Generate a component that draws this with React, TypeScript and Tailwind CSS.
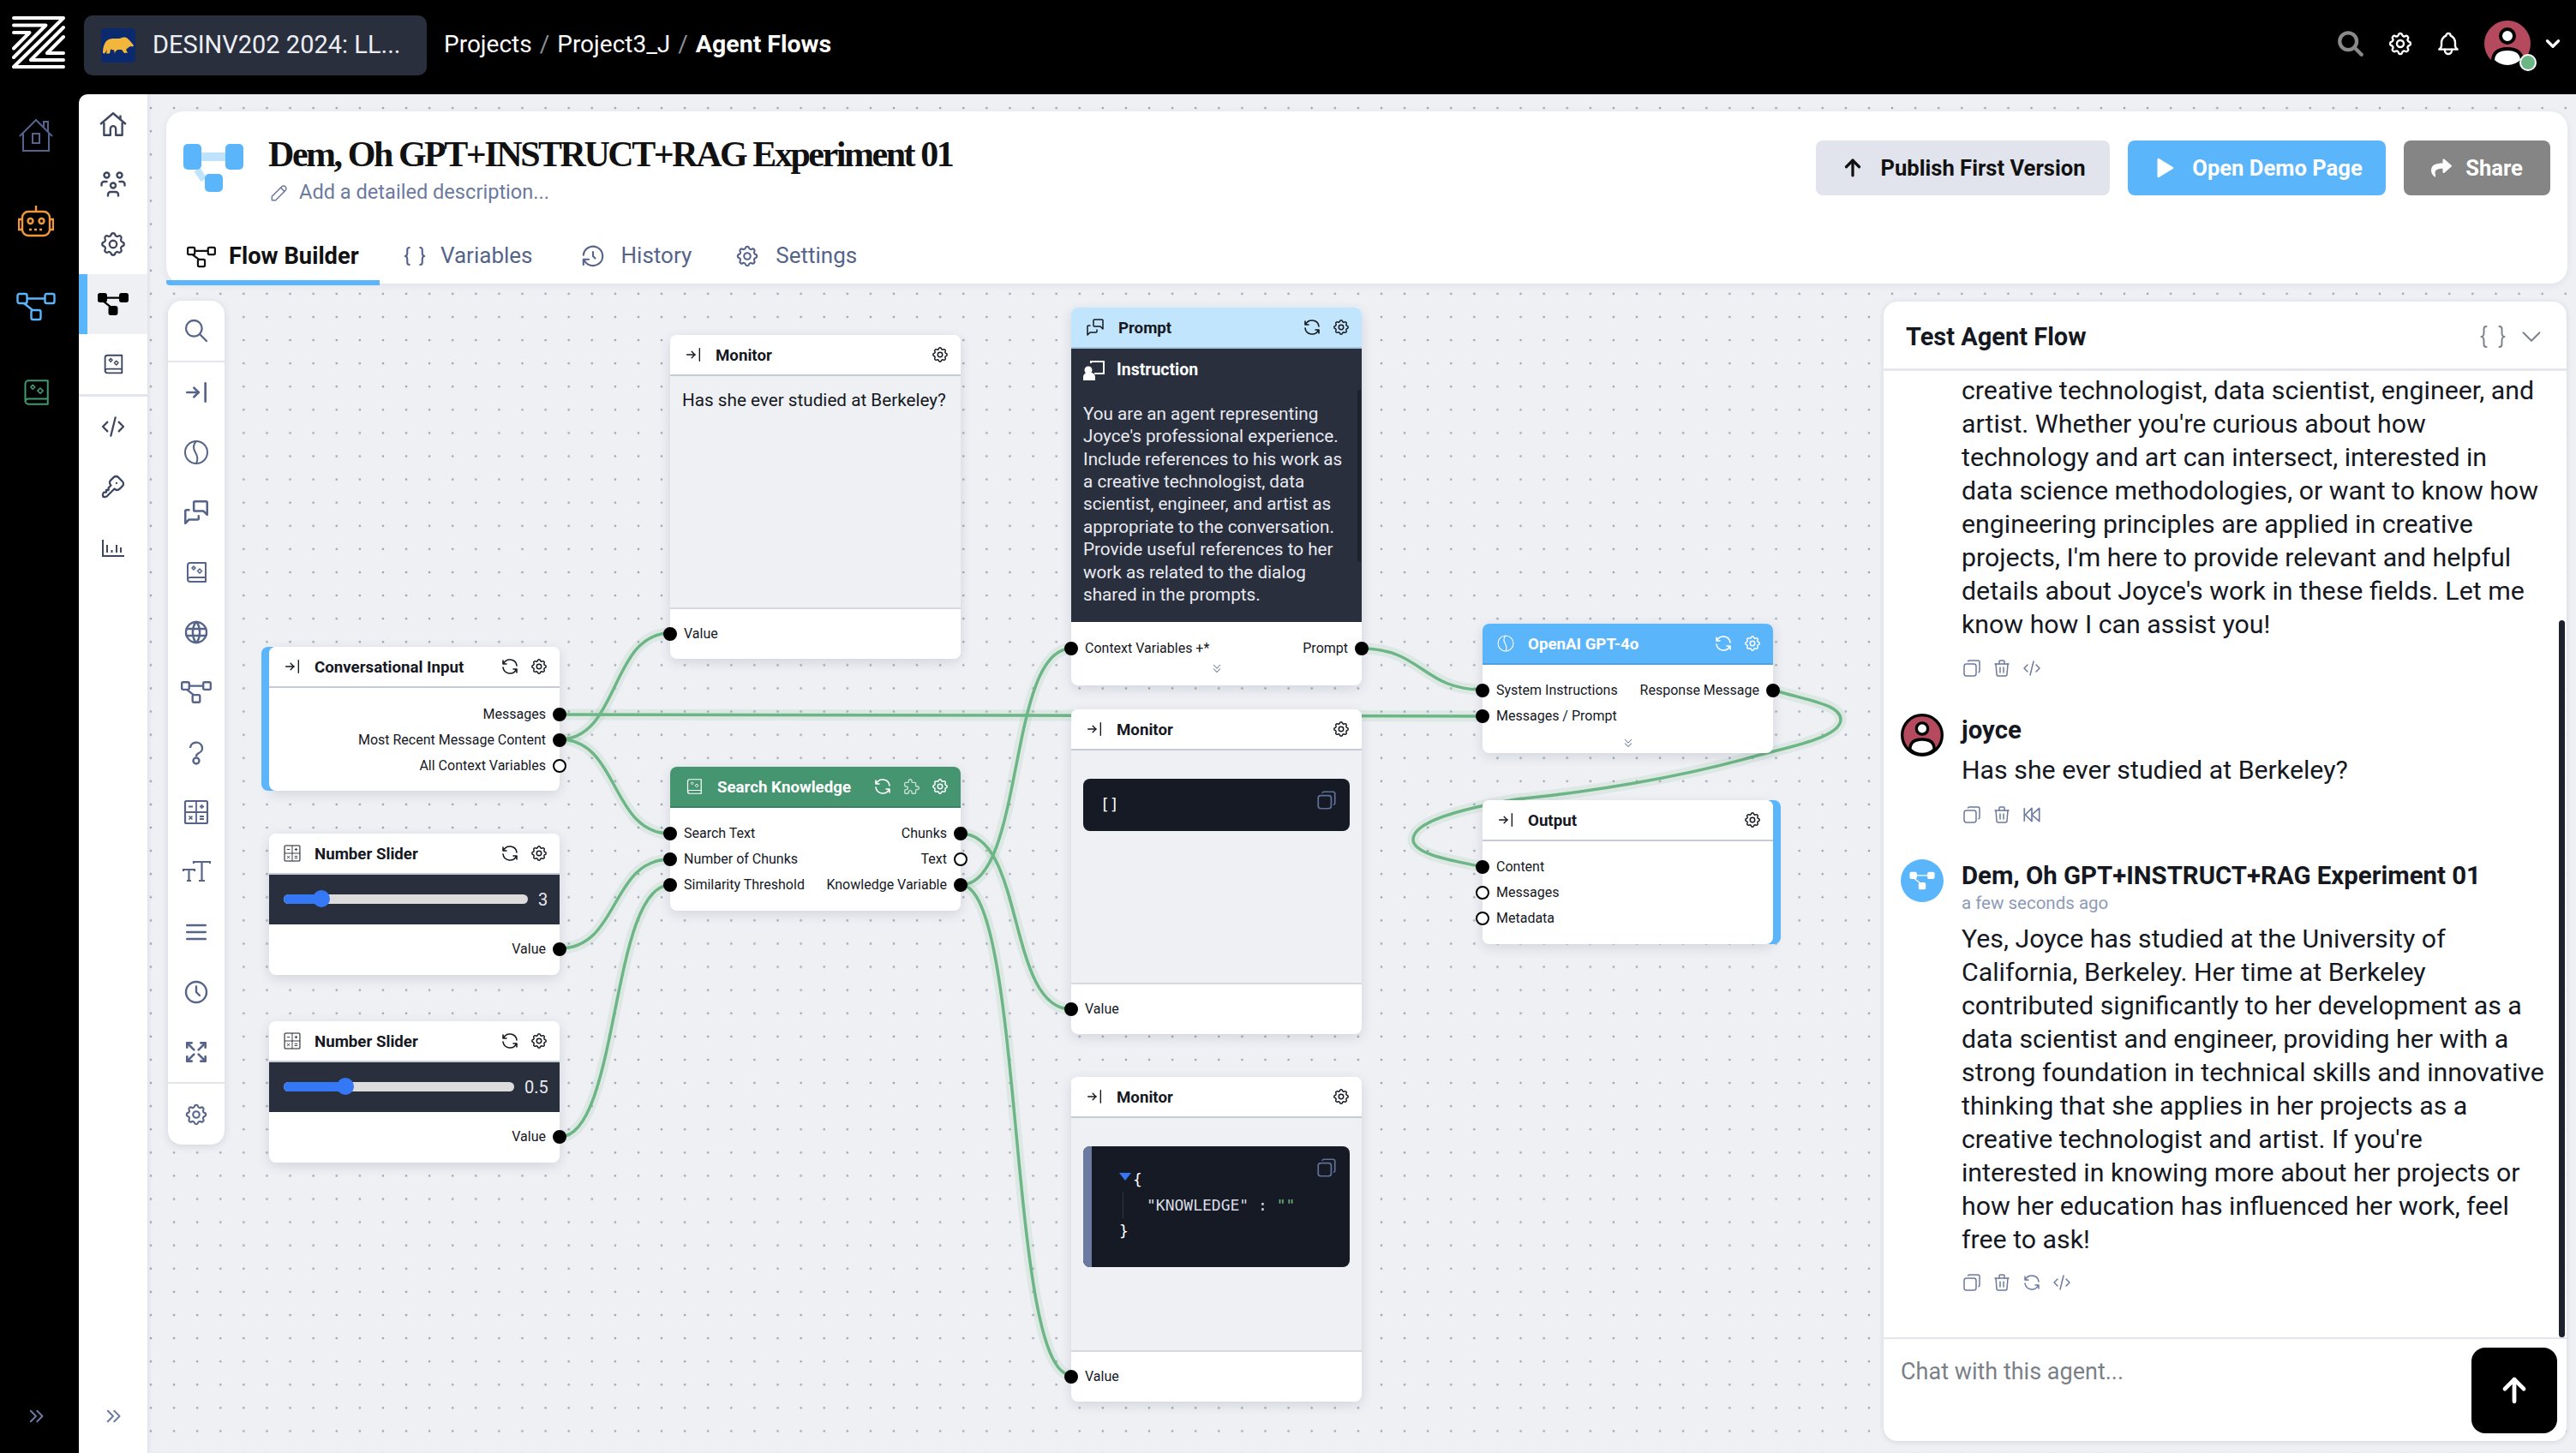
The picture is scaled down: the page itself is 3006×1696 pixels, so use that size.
import type { ReactNode } from 'react';
import { FaShare } from 'react-icons/fa';
import {
  TbArrowBarToRight,
  TbArrowUp,
  TbArrowsMaximize,
  TbBell,
  TbBraces,
  TbChevronDown,
  TbChevronsDown,
  TbChevronsRight,
  TbClock,
  TbCode,
  TbCopy,
  TbHistory,
  TbKey,
  TbMenu2,
  TbMessages,
  TbPencil,
  TbPlayerPlayFilled,
  TbPuzzle,
  TbRefresh,
  TbSearch,
  TbSettings,
  TbTrash,
  TbUsersGroup,
  TbWorld,
} from 'react-icons/tb';

const ORIGIN_X = 172;
const ORIGIN_Y = 331;

function FlowWide({ w = 46, h = 34, filled = false, stroke = 2.4 }: { w?: number; h?: number; filled?: boolean; stroke?: number }) {
  const fill = filled ? 'currentColor' : 'none';
  return (
    <svg width={w} height={h} viewBox="0 0 46 34" fill="none" stroke="currentColor" strokeWidth={stroke}>
      <rect x="1.5" y="2" width="11" height="11" rx="2" fill={fill} />
      <rect x="33.5" y="2" width="11" height="11" rx="2" fill={fill} />
      <rect x="17.5" y="21" width="11" height="11" rx="2" fill={fill} />
      <path d="M12.500 7.500h21M9 13l10 8" />
    </svg>
  );
}

function HomeIcon({ size = 34 }: { size?: number }) {
  return (
    <svg width={size} height={size} viewBox="0 0 32 32" fill="none" stroke="currentColor" strokeWidth="2.2" strokeLinejoin="round">
      <path d="M2 16 16 4l14 12M6 13v15h7v-7a3 3 0 0 1 6 0v7h7V13M24 6v5" />
    </svg>
  );
}

function QuestionIcon({ size = 32 }: { size?: number }) {
  return (
    <svg width={size} height={size} viewBox="0 0 32 32" fill="none" stroke="currentColor" strokeWidth="2.4">
      <path d="M9 11a7 6.500 0 1 1 10 6c-2 1-3 2-3 4" />
      <circle cx="16" cy="26" r="3.500" />
    </svg>
  );
}

function BookIcon({ size = 32, stroke = 2 }: { size?: number; stroke?: number }) {
  return (
    <svg width={size} height={size} viewBox="0 0 32 32" fill="none" stroke="currentColor" strokeWidth={stroke} strokeLinejoin="round">
      <path d="M6 25V8a3 3 0 0 1 3-3h18v22H9a3 3 0 0 1-3-3a3 3 0 0 1 3-2h18" />
      <path d="M13 9l2 2-2 2-2-2zM20 12l2.500 2.500-2.500 2.500-2.500-2.500z" strokeWidth={stroke * 0.8} />
    </svg>
  );
}

function BrainIcon({ size = 32, stroke = 2 }: { size?: number; stroke?: number }) {
  return (
    <svg width={size} height={size} viewBox="0 0 32 32" fill="none" stroke="currentColor" strokeWidth={stroke}>
      <circle cx="16" cy="16" r="13" />
      <path d="M16 3c-4 4-4 8-1 13s3 9 1 13" />
    </svg>
  );
}

function MathIcon({ size = 32, stroke = 2.2 }: { size?: number; stroke?: number }) {
  return (
    <svg width={size} height={size} viewBox="0 0 32 32" fill="none" stroke="currentColor" strokeWidth={stroke}>
      <rect x="3" y="3" width="26" height="26" rx="1.500" />
      <path d="M16 3v26M3 16h26M7 9.500h5M20 9.500h5M22.500 7v5M7.500 20.500l4 4M11.500 20.500l-4 4M20 21h5M20 24h5" strokeWidth={stroke * 0.8} />
    </svg>
  );
}

function TextSizeIcon({ size = 34 }: { size?: number }) {
  return (
    <svg width={size} height={size} viewBox="0 0 34 34" fill="none" stroke="currentColor" strokeWidth="2.2">
      <path d="M14 7V5h19v2M23.500 5v22M20 27h7M2 16v-2h13v2M8.500 14v13M6 27h5" />
    </svg>
  );
}

function ChartIcon({ size = 30 }: { size?: number }) {
  return (
    <svg width={size} height={size} viewBox="0 0 30 30" fill="none" stroke="currentColor" strokeWidth="2">
      <path d="M3 7v19h25M8 22v-9M13.500 22v-3M19 22v-9M24 22v-6" />
    </svg>
  );
}

function HouseIcon() {
  return (
    <svg width="42" height="40" viewBox="0 0 42 40" fill="none" stroke="currentColor" strokeWidth="2">
      <path d="M2 21 21 2l19 19M6 18v20h30V18M30 11V4h5v12" />
      <rect x="17" y="18" width="8" height="11" />
    </svg>
  );
}

function RobotIcon() {
  return (
    <svg width="42" height="38" viewBox="0 0 42 38" fill="none" stroke="currentColor" strokeWidth="2.4">
      <path d="M21 1v7" />
      <rect x="5" y="8" width="32" height="28" rx="7" />
      <path d="M5 17H1v12h4M37 17h4v12h-4" />
      <circle cx="14.500" cy="19" r="3" />
      <circle cx="27.500" cy="19" r="3" />
      <path d="M13 29h16" strokeDasharray="3 3" />
    </svg>
  );
}

function InstructionIcon() {
  return (
    <svg width="26" height="26" viewBox="0 0 26 26" fill="none" stroke="currentColor" strokeWidth="2">
      <path d="M9 5V3h15v14H13" />
      <circle cx="6" cy="13" r="3.500" fill="currentColor" />
      <path d="M1 24v-3a4 4 0 0 1 4-4h4a4 4 0 0 1 4 4v3z" fill="currentColor" />
    </svg>
  );
}

function RewindIcon() {
  return (
    <svg width="24" height="24" viewBox="0 0 22 22" fill="none" stroke="currentColor" strokeWidth="1.500" strokeLinejoin="round">
      <path d="M3 4v14M11 4l-7 7 7 7zM19 4l-8 7 8 7z" />
    </svg>
  );
}

function ZLogo() {
  return (
    <svg width="62" height="64" viewBox="14 18 62 64" fill="none" stroke="white" strokeWidth="4" strokeLinecap="round" strokeLinejoin="round" className="shrink-0">
      <path d="M16 21h58L16 78h58" />
      <path d="M16 29.500h37.500L16 67" />
      <path d="M16 38h18.500L16 56.500" />
      <path d="M74 32 36 70h38" />
      <path d="M74 43 55 62h19" />
    </svg>
  );
}

function Bear() {
  return (
    <svg width="36" height="20" viewBox="0 0 36 20" fill="#f2b63c">
      <path d="M0 19C0 12 2 5 7 3c5-2 10 0 14-1.500C24 0 27 0 29 2l3 3 4 5-1 1.500-3-.5-3 2-2 2 2 3.500-4 .5-3-4-5 0-3 3 .5 1.500H14l-1-4-4-1-1 5H4l1-5-1 2-2 3z" />
    </svg>
  );
}

function Avatar({ size, ring = false }: { size: number; ring?: boolean }) {
  return (
    <svg width={size} height={size} viewBox="0 0 60 60" className="shrink-0">
      <circle cx="30" cy="30" r="28" fill="#b5495d" stroke="black" strokeWidth={ring ? 4 : 2} />
      <circle cx="30" cy="21" r="8" fill="white" stroke="black" strokeWidth="4" />
      <path d="M13 50c0-9 6-14 17-14s17 5 17 14c-5 5-11 7-17 7s-12-2-17-7z" fill="white" stroke="black" strokeWidth="4" />
    </svg>
  );
}

function wire(x1: number, y1: number, x2: number, y2: number, c = 80) {
  return `M${x1} ${y1}C${x1 + c} ${y1} ${x2 - c} ${y2} ${x2} ${y2}`;
}

const WIRES = [
  wire(653, 863, 782, 739, 70),
  wire(653, 863, 782, 973, 70),
  wire(653, 834, 1730, 836, 100),
  wire(653, 1107, 782, 1003, 70),
  wire(653, 1327, 782, 1033, 70),
  wire(1121, 973, 1250, 1178, 75),
  wire(1121, 1033, 1250, 757, 75),
  wire(1121, 1033, 1250, 1605, 75),
  wire(1589, 757, 1730, 805, 70),
  'M2068 805C2110 818 2148 822 2148 840C2148 860 2090 872 2050 882C1960 908 1850 925 1769 933C1700 945 1649 960 1649 980C1649 998 1700 1005 1730 1012',
];

function Port({ side, open = false }: { side: 'left' | 'right'; open?: boolean }) {
  return (
    <span
      className={`absolute top-1/2 -translate-y-1/2 w-[16px] h-[16px] rounded-full border-2 border-black ${
        side === 'left' ? 'left-[-8px]' : 'right-[-8px]'
      } ${open ? 'bg-white' : 'bg-black'}`}
    />
  );
}

function Row({ left, right, leftOpen, rightOpen }: { left?: string; right?: string; leftOpen?: boolean; rightOpen?: boolean }) {
  return (
    <div className="relative h-[30px] flex items-center justify-between px-[16px] text-[16px] text-[#15181f] whitespace-nowrap">
      {left ? <Port side="left" open={leftOpen} /> : null}
      <span>{left}</span>
      <span>{right}</span>
      {right ? <Port side="right" open={rightOpen} /> : null}
    </div>
  );
}

type NodeProps = {
  x: number;
  y: number;
  h: number;
  w?: number;
  title: string;
  icon: ReactNode;
  actions?: ReactNode[];
  headerClass?: string;
  accent?: 'left' | 'right';
  children?: ReactNode;
};

function FlowNode({ x, y, h, w = 339, title, icon, actions, headerClass = 'bg-white text-[#15181f] border-[#c6cbd8]', accent, children }: NodeProps) {
  const shadow =
    accent === 'left'
      ? 'shadow-[-9px_0_0_#5bb5fb,0_4px_14px_rgba(40,50,80,0.14)]'
      : accent === 'right'
        ? 'shadow-[9px_0_0_#5bb5fb,0_4px_14px_rgba(40,50,80,0.14)]'
        : 'shadow-[0_4px_14px_rgba(40,50,80,0.14)]';
  return (
    <div className={`absolute flex flex-col rounded-[8px] bg-white ${shadow}`} style={{ left: x - ORIGIN_X, top: y - ORIGIN_Y, width: w, height: h }}>
      <div className={`h-[48px] shrink-0 flex items-center gap-[15px] pl-[16px] pr-[13px] rounded-t-[8px] border-b-2 ${headerClass}`}>
        {icon}
        <span className="flex-1 pt-[3px] text-[18.700px] font-bold whitespace-nowrap">{title}</span>
        <div className="flex items-center gap-[11px]">{actions}</div>
      </div>
      {children}
    </div>
  );
}

const refresh = <TbRefresh key="r" size={24} strokeWidth={1.6} />;
const gear = <TbSettings key="g" size={22} strokeWidth={1.6} />;
const inIcon = <TbArrowBarToRight size={22} strokeWidth={1.5} />;

function Slider({ trackW, thumb, fill, value }: { trackW: number; thumb: number; fill: number; value: string }) {
  return (
    <div className="h-[58px] bg-[#2a2f3e] flex items-center pl-[17px] gap-[12px]">
      <div className="relative h-[11px] -mt-[2px] rounded-full bg-[#dcdcdc] shrink-0" style={{ width: trackW }}>
        <div className="absolute left-0 top-0 h-full rounded-full bg-[#3478f6]" style={{ width: fill }} />
        <div className="absolute top-1/2 -translate-y-1/2 w-[20px] h-[20px] rounded-full bg-[#3478f6]" style={{ left: thumb }} />
      </div>
      <span className="text-[20px] text-[#e8eaf0]">{value}</span>
    </div>
  );
}

function MonitorFooter() {
  return (
    <div className="h-[60px] shrink-0 flex flex-col justify-center border-t-2 border-[#d5d8e0] mt-auto">
      <Row left="Value" />
    </div>
  );
}

function CodeBox({ top, h, bar, children }: { top: number; h: number; bar?: boolean; children: ReactNode }) {
  return (
    <div className="relative mx-[14px] rounded-[8px] bg-[#161a24] overflow-hidden" style={{ marginTop: top, height: h }}>
      {bar ? <div className="absolute left-0 top-0 bottom-0 w-[10px] bg-[#6b7a9e]" /> : null}
      <TbCopy className="absolute right-[14px] top-[12px] text-[#5f6f97] -scale-x-100" size={26} strokeWidth={1.6} />
      {children}
    </div>
  );
}

const INSTRUCTION = [
  'You are an agent representing',
  "Joyce's professional experience.",
  'Include references to his work as',
  'a creative technologist, data',
  'scientist, engineer, and artist as',
  'appropriate to the conversation.',
  'Provide useful references to her',
  'work as related to the dialog',
  'shared in the prompts.',
];

const FIRST_REPLY = [
  'creative technologist, data scientist, engineer, and',
  "artist. Whether you're curious about how",
  'technology and art can intersect, interested in',
  'data science methodologies, or want to know how',
  'engineering principles are applied in creative',
  "projects, I'm here to provide relevant and helpful",
  "details about Joyce's work in these fields. Let me",
  'know how I can assist you!',
];

const SECOND_REPLY = [
  'Yes, Joyce has studied at the University of',
  'California, Berkeley. Her time at Berkeley',
  'contributed significantly to her development as a',
  'data scientist and engineer, providing her with a',
  'strong foundation in technical skills and innovative',
  'thinking that she applies in her projects as a',
  "creative technologist and artist. If you're",
  'interested in knowing more about her projects or',
  'how her education has influenced her work, feel',
  'free to ask!',
];

function Lines({ lines }: { lines: string[] }) {
  return (
    <div className="text-[30.300px] leading-[39px] text-[#15181f]">
      {lines.map((l) => (
        <div key={l} className="whitespace-nowrap">
          {l}
        </div>
      ))}
    </div>
  );
}

function MessageActions({ children }: { children?: ReactNode }) {
  return (
    <div className="flex items-center gap-[11px] h-[24px] text-[#6b7a9e]">
      <TbCopy size={24} strokeWidth={1.5} className="-scale-x-100" />
      <TbTrash size={24} strokeWidth={1.5} />
      {children}
    </div>
  );
}

const toolbarItems: ReactNode[] = [
  <TbArrowBarToRight size={32} strokeWidth={2} />,
  <BrainIcon />,
  <TbMessages size={34} strokeWidth={1.8} />,
  <BookIcon />,
  <TbWorld size={32} strokeWidth={1.8} />,
  <FlowWide w={36} h={28} stroke={3} />,
  <QuestionIcon />,
  <MathIcon />,
  <TextSizeIcon />,
  <TbMenu2 size={32} strokeWidth={2} />,
  <TbClock size={32} strokeWidth={1.8} />,
  <TbArrowsMaximize size={32} strokeWidth={2} />,
];

function Canvas() {
  return (
    <>
      <div className="absolute inset-0">
        <svg width="3006" height="1696" viewBox="0 0 3006 1696" fill="none" className="absolute left-[-172px] top-[-331px] pointer-events-none">
          {WIRES.map((d) => (
            <path key={d} d={d} stroke="#6cb585" strokeOpacity="0.13" strokeWidth="13" />
          ))}
          {WIRES.map((d) => (
            <path key={d} d={d} stroke="#6cb585" strokeWidth="3.5" />
          ))}
        </svg>

        <FlowNode x={314} y={755} h={168} title="Conversational Input" icon={inIcon} actions={[refresh, gear]} accent="left">
          <div className="pt-[16px]">
            <Row right="Messages" />
            <Row right="Most Recent Message Content" />
            <Row right="All Context Variables" rightOpen />
          </div>
        </FlowNode>

        <FlowNode x={314} y={973} h={165} title="Number Slider" icon={<MathIcon size={22} stroke={1.5} />} actions={[refresh, gear]}>
          <Slider trackW={285} fill={44} thumb={34} value="3" />
          <div className="pt-[14px]">
            <Row right="Value" />
          </div>
        </FlowNode>

        <FlowNode x={314} y={1192} h={165} title="Number Slider" icon={<MathIcon size={22} stroke={1.5} />} actions={[refresh, gear]}>
          <Slider trackW={269} fill={72} thumb={62} value="0.5" />
          <div className="pt-[14px]">
            <Row right="Value" />
          </div>
        </FlowNode>

        <FlowNode x={782} y={391} h={378} title="Monitor" icon={inIcon} actions={[gear]}>
          <div className="flex-1 bg-[#eef0f4] px-[14px] pt-[13px] text-[20.700px] text-[#15181f] whitespace-nowrap">Has she ever studied at Berkeley?</div>
          <MonitorFooter />
        </FlowNode>

        <FlowNode
          x={782}
          y={895}
          h={168}
          title="Search Knowledge"
          icon={<BookIcon size={24} stroke={1.6} />}
          actions={[refresh, <TbPuzzle key="p" size={22} strokeWidth={1.5} className="opacity-70" />, gear]}
          headerClass="bg-[#459570] text-white border-[#3b8062]"
        >
          <div className="pt-[15px]">
            <Row left="Search Text" right="Chunks" />
            <Row left="Number of Chunks" right="Text" rightOpen />
            <Row left="Similarity Threshold" right="Knowledge Variable" />
          </div>
        </FlowNode>

        <FlowNode
          x={1250}
          y={359}
          h={441}
          title="Prompt"
          icon={<TbMessages size={24} strokeWidth={1.5} />}
          actions={[refresh, gear]}
          headerClass="bg-[#c0e5fc] text-[#15181f] border-[#a9c5dc]"
        >
          <div className="relative h-[319px] shrink-0 bg-[#2a2f3e] px-[14px] text-white">
            <div className="absolute right-[1px] top-[48px] w-[4px] h-[201px] rounded-full bg-[#1d212c]" />
            <div className="flex items-center gap-[13px] h-[50px]">
              <InstructionIcon />
              <span className="text-[19.500px] font-bold">Instruction</span>
            </div>
            <div className="mt-[13px] text-[20.700px] leading-[26.360px] text-[#e8eaf0]">
              {INSTRUCTION.map((l) => (
                <div key={l} className="whitespace-nowrap">
                  {l}
                </div>
              ))}
            </div>
          </div>
          <div className="pt-[16px]">
            <Row left="Context Variables +*" right="Prompt" />
          </div>
          <TbChevronsDown size={18} strokeWidth={1.4} className="mx-auto mt-[-1px] text-[#6b7a9e]" />
        </FlowNode>

        <FlowNode x={1250} y={828} h={379} title="Monitor" icon={inIcon} actions={[gear]}>
          <div className="flex-1 bg-[#eef0f4]">
            <CodeBox top={33} h={61}>
              <span className="absolute left-[20px] top-[18px] text-[18px] leading-[24px] font-['DejaVu_Sans_Mono',monospace] text-white">[]</span>
            </CodeBox>
          </div>
          <MonitorFooter />
        </FlowNode>

        <FlowNode x={1250} y={1257} h={379} title="Monitor" icon={inIcon} actions={[gear]}>
          <div className="flex-1 bg-[#eef0f4]">
            <CodeBox top={33} h={141} bar>
              <div className="pt-[24px] pl-[46px] text-[18px] leading-[30px] font-['DejaVu_Sans_Mono',monospace] text-white whitespace-nowrap">
                <div className="relative">
                  <span className="absolute left-[-4px] top-[7px] w-0 h-0 border-x-[7px] border-x-transparent border-t-[9px] border-t-[#3478f6]" />
                  <span className="pl-[12px]">{'{'}</span>
                </div>
                <div className="pl-[27px] border-l border-[#2f3542] text-[#d9dce4]">
                  "KNOWLEDGE" : <span className="text-[#6cb585]">""</span>
                </div>
                <div className="-ml-[4px]">{'}'}</div>
              </div>
            </CodeBox>
          </div>
          <MonitorFooter />
        </FlowNode>

        <FlowNode
          x={1730}
          y={728}
          h={151}
          title="OpenAI GPT-4o"
          icon={<BrainIcon size={22} stroke={1.6} />}
          actions={[refresh, gear]}
          headerClass="bg-[#5bb5fb] text-white border-[#4ea0e0]"
        >
          <div className="pt-[15px]">
            <Row left="System Instructions" right="Response Message" />
            <Row left="Messages / Prompt" />
          </div>
          <TbChevronsDown size={18} strokeWidth={1.4} className="mx-auto mt-[7px] text-[#6b7a9e]" />
        </FlowNode>

        <FlowNode x={1730} y={934} h={168} title="Output" icon={inIcon} actions={[gear]} accent="right">
          <div className="pt-[15px]">
            <Row left="Content" />
            <Row left="Messages" leftOpen />
            <Row left="Metadata" leftOpen />
          </div>
        </FlowNode>
      </div>

      <div className="relative mt-[20px] ml-[24px] w-[66px] h-[985px] shrink-0 rounded-[16px] bg-white shadow-[0_2px_10px_rgba(40,50,80,0.14)] flex flex-col items-center text-[#56648a]">
        <div className="h-[72px] w-full shrink-0 flex items-center justify-center border-b-2 border-[#e3e5ec]">
          <TbSearch size={32} strokeWidth={1.7} />
        </div>
        {toolbarItems.map((icon, i) => (
          <div key={i} className="h-[70px] w-full shrink-0 flex items-center justify-center">
            {icon}
          </div>
        ))}
        <div className="flex-1 w-full flex items-center justify-center border-t-2 border-[#e3e5ec]">
          <TbSettings size={30} strokeWidth={1.7} />
        </div>
      </div>
    </>
  );
}

function ChatPanel() {
  return (
    <aside className="relative mt-[21px] mb-[14px] mr-[11px] ml-auto w-[797px] flex flex-col rounded-[16px] bg-white shadow-[0_1px_6px_rgba(40,50,80,0.14)] overflow-hidden">
      <div className="h-[81px] shrink-0 flex items-center pl-[26px] pr-[22px] pt-[3px] border-b-[3px] border-[#e6e8ee]">
        <span className="flex-1 pt-[3px] text-[29px] font-bold text-[#15181f]">Test Agent Flow</span>
        <TbBraces size={36} strokeWidth={1.3} className="text-[#7b7f88]" />
        <TbChevronDown size={38} strokeWidth={1.2} className="ml-[8px] text-[#7b7f88]" />
      </div>

      <div className="relative flex-1 overflow-hidden pt-[3px]">
        <div className="absolute right-[2px] top-[291px] bottom-0 w-[7px] rounded-full bg-[#1d212c]" />
        <div className="pl-[91px]">
          <Lines lines={FIRST_REPLY} />
          <div className="mt-[20px]">
            <MessageActions>
              <TbCode size={24} strokeWidth={1.5} />
            </MessageActions>
          </div>
        </div>

        <div className="flex mt-[41px]">
          <div className="w-[91px] shrink-0 pl-[20px]">
            <Avatar size={50} ring />
          </div>
          <div>
            <div className="text-[29.400px] leading-[39px] font-bold text-[#15181f]">joyce</div>
            <div className="mt-[7px]">
              <Lines lines={['Has she ever studied at Berkeley?']} />
            </div>
            <div className="mt-[21px]">
              <MessageActions>
                <RewindIcon />
              </MessageActions>
            </div>
          </div>
        </div>

        <div className="flex mt-[40px]">
          <div className="w-[91px] shrink-0 pl-[20px]">
            <div className="w-[50px] h-[50px] rounded-full bg-[#5bb5fb] flex items-center justify-center text-white">
              <FlowWide w={30} h={22} filled stroke={2} />
            </div>
          </div>
          <div>
            <div className="text-[29.400px] leading-[39px] font-bold text-[#15181f] whitespace-nowrap">Dem, Oh GPT+INSTRUCT+RAG Experiment 01</div>
            <div className="text-[20.500px] leading-[26px] text-[#8e9ab8] -mt-[1px]">a few seconds ago</div>
            <div className="mt-[9px]">
              <Lines lines={SECOND_REPLY} />
            </div>
            <div className="mt-[19px]">
              <MessageActions>
                <TbRefresh size={24} strokeWidth={1.5} />
                <TbCode size={24} strokeWidth={1.5} />
              </MessageActions>
            </div>
          </div>
        </div>
      </div>

      <div className="h-[121px] shrink-0 flex items-start justify-between pl-[20px] pr-[11px] pt-[10px] border-t-2 border-[#e3e5ec]">
        <span className="mt-[8px] text-[27px] text-[#7b7f88]">Chat with this agent...</span>
        <button type="button" className="w-[100px] h-[100px] rounded-[16px] bg-black text-white flex items-center justify-center">
          <TbArrowUp size={44} strokeWidth={2.6} />
        </button>
      </div>
    </aside>
  );
}

export default function App() {
  return (
    <div className="w-[3006px] h-[1696px] overflow-hidden flex flex-col bg-black font-['Roboto',sans-serif]">
      <header className="h-[110px] shrink-0 flex items-center text-white">
        <div className="pl-[14px] w-[98px] -mt-[10px]">
          <ZLogo />
        </div>
        <div className="w-[400px] h-[70px] -mt-[4px] rounded-[10px] bg-[#2a2f3e] flex items-center pl-[20px] gap-[20px]">
          <div className="w-[40px] h-[40px] rounded-[4px] bg-[#0b2a6d] flex items-center justify-center">
            <Bear />
          </div>
          <span className="pb-[1px] text-[29px] text-[#eceef3] whitespace-nowrap">DESINV202 2024: LL...</span>
        </div>
        <nav className="ml-[20px] pb-[6px] flex items-center gap-[9px] text-[28px] whitespace-nowrap">
          <span>Projects</span>
          <span className="text-[#8b8f99]">/</span>
          <span>Project3_J</span>
          <span className="text-[#8b8f99]">/</span>
          <span className="text-[28.500px] font-bold">Agent Flows</span>
        </nav>
        <div className="ml-auto flex items-center pr-[14px] pb-[8px]">
          <TbSearch size={34} strokeWidth={3} className="text-[#8a8a8a]" />
          <TbSettings size={32} strokeWidth={1.8} className="ml-[25px]" />
          <TbBell size={32} strokeWidth={1.8} className="ml-[24px]" />
          <div className="relative ml-[23px]">
            <Avatar size={60} />
            <span className="absolute right-[-4px] bottom-[-2px] w-[20px] h-[20px] rounded-full bg-[#6cb585] border-2 border-white" />
          </div>
          <TbChevronDown size={26} strokeWidth={3} className="ml-[10px]" />
        </div>
      </header>

      <div className="flex-1 flex min-h-0">
        <div className="w-[92px] shrink-0 pr-[8px] flex flex-col items-center gap-[4px]">
          <div className="h-[96px] flex items-center text-[#55648c]">
            <HouseIcon />
          </div>
          <div className="h-[96px] flex items-center text-[#f0983a]">
            <RobotIcon />
          </div>
          <div className="h-[96px] flex items-center text-[#5bb5fb]">
            <FlowWide />
          </div>
          <div className="h-[96px] flex items-center text-[#3f9a70]">
            <BookIcon size={40} stroke={1.6} />
          </div>
          <TbChevronsRight size={30} strokeWidth={1.6} className="mt-auto mb-[28px] text-[#6b7a9e]" />
        </div>

        <div className="w-[80px] shrink-0 flex flex-col items-center rounded-tl-[10px] bg-white text-[#3d4760]">
          <div className="h-[70px] shrink-0 flex items-center">
            <HomeIcon />
          </div>
          <div className="h-[70px] shrink-0 flex items-center">
            <TbUsersGroup size={36} strokeWidth={1.6} />
          </div>
          <div className="h-[70px] shrink-0 flex items-center">
            <TbSettings size={34} strokeWidth={1.6} />
          </div>
          <div className="h-[70px] w-full shrink-0 flex items-center justify-center bg-[#eef0f4] border-l-[10px] border-[#5bb5fb] pr-[10px] text-black">
            <FlowWide w={36} h={28} filled stroke={3} />
          </div>
          <div className="h-[73px] w-full shrink-0 flex items-center justify-center border-b-[3px] border-[#e3e5ec]">
            <BookIcon size={30} stroke={2} />
          </div>
          <div className="h-[70px] shrink-0 flex items-center">
            <TbCode size={32} strokeWidth={1.7} />
          </div>
          <div className="h-[70px] shrink-0 flex items-center">
            <TbKey size={32} strokeWidth={1.7} />
          </div>
          <div className="h-[70px] shrink-0 flex items-center">
            <ChartIcon />
          </div>
          <TbChevronsRight size={30} strokeWidth={1.6} className="mt-auto mb-[28px] text-[#6b7a9e]" />
        </div>

        <main className="flex-1 min-w-0 flex flex-col bg-[#eef0f4] bg-[radial-gradient(circle,#9da2ae_1.2px,transparent_1.6px)] bg-[size:27.1px_27.1px] bg-[position:-9.55px_2.55px] shadow-[inset_4px_0_4px_-2px_rgba(40,50,80,0.08)]">
          <section className="relative z-10 h-[201px] shrink-0 mt-[20px] ml-[22px] mr-[10px] flex flex-col rounded-[20px] bg-white shadow-[0_2px_8px_rgba(40,50,80,0.08)]">
            <div className="flex-1 flex items-start pl-[20px] pr-[20px]">
              <div className="mt-[38px] text-[#5bb5fb]">
                <svg width="70" height="56" viewBox="0 0 70 56" fill="none">
                  <path d="M20 15h30" stroke="#bfe3fd" strokeWidth="10" />
                  <path d="M16 30l8 12" stroke="#bfe3fd" strokeWidth="8" />
                  <rect x="0" y="0" width="21" height="30" rx="5" fill="currentColor" />
                  <rect x="49" y="0" width="21" height="30" rx="5" fill="currentColor" />
                  <rect x="25" y="35" width="21" height="21" rx="5" fill="currentColor" />
                </svg>
              </div>
              <div className="ml-[29px] mt-[22px]">
                <h1 className="text-[42px] leading-[56px] font-bold tracking-[-2.450px] text-[#111] whitespace-nowrap font-['Liberation_Serif',serif]">
                  Dem, Oh GPT+INSTRUCT+RAG Experiment 01
                </h1>
                <div className="-mt-[1px] flex items-center gap-[10px] text-[23.600px] text-[#6b7a9e]">
                  <TbPencil size={26} strokeWidth={1.4} />
                  <span>Add a detailed description...</span>
                </div>
              </div>
              <div className="ml-auto mt-[34px] flex gap-[21px] text-[25.600px] font-bold whitespace-nowrap">
                <button type="button" className="w-[343px] h-[64px] rounded-[8px] bg-[#e1e4ec] text-[#111] flex items-center justify-center gap-[17px]">
                  <TbArrowUp size={30} strokeWidth={2.6} />
                  Publish First Version
                </button>
                <button type="button" className="w-[301px] h-[64px] rounded-[8px] bg-[#5bb5fb] text-white flex items-center justify-center gap-[18px]">
                  <TbPlayerPlayFilled size={30} />
                  Open Demo Page
                </button>
                <button type="button" className="w-[171px] h-[64px] rounded-[8px] bg-[#858585] text-white flex items-center justify-center gap-[16px]">
                  <FaShare size={24} />
                  Share
                </button>
              </div>
            </div>
            <div className="h-[68px] shrink-0 flex text-[26px] whitespace-nowrap">
              <div className="w-[249px] -mb-[2px] flex items-center gap-[15px] pl-[24px] pt-[9px] border-b-[6px] border-[#5bb5fb] rounded-bl-[4px] text-[27.300px] font-bold text-[#111]">
                <FlowWide w={34} h={28} stroke={3} />
                Flow Builder
              </div>
              <div className="ml-[2px] pt-[3px] flex items-center gap-[15px] px-[24px] text-[#56648a]">
                <TbBraces size={30} strokeWidth={1.7} />
                Variables
              </div>
              <div className="ml-[7px] pt-[3px] flex items-center gap-[18px] px-[24px] text-[#56648a]">
                <TbHistory size={30} strokeWidth={1.7} />
                History
              </div>
              <div className="ml-[2px] pt-[3px] flex items-center gap-[18px] px-[24px] text-[#56648a]">
                <TbSettings size={30} strokeWidth={1.7} />
                Settings
              </div>
            </div>
          </section>

          <div className="relative flex-1 min-h-0 flex">
            <Canvas />
            <ChatPanel />
          </div>
        </main>
      </div>
    </div>
  );
}
